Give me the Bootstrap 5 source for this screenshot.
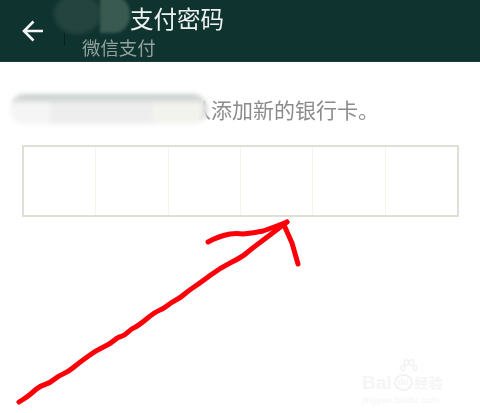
<!DOCTYPE html>
<html lang="zh">
<head>
<meta charset="utf-8">
<title>支付密码</title>
<link rel="stylesheet" href="https://cdn.jsdelivr.net/npm/bootstrap@5.3.0/dist/css/bootstrap.min.css">
<style>
html,body{margin:0;height:413px;overflow:hidden;background:#fff;font-family:"Liberation Sans","Noto Sans CJK SC",sans-serif}
.screen{position:relative;width:480px;height:413px;overflow:hidden}
.appbar{height:62px;background:#0f332f;padding-left:22px;border-bottom:1px solid #1c3d38}
.back-ic{width:22px;height:22px;margin-top:20px;flex:none}
.head-txt{margin-left:38px;position:relative}
.pay-title{font-size:23.5px;line-height:26px;margin:7px 0 0 48px;color:#eef3f1;white-space:nowrap;filter:blur(.3px)}
.pay-sub{font-size:18.4px;line-height:20px;margin-top:6px;color:#93a29d;white-space:nowrap;filter:blur(.3px)}
.smudge-a{position:absolute;left:54px;top:-6px;width:47px;height:40px;background:#24453f;border-radius:50%;filter:blur(2px)}
.smudge-b{position:absolute;left:100px;top:-4px;width:30px;height:37px;background:#385a51;border-radius:0 50% 50% 0;filter:blur(1.5px)}
.tick{position:absolute;left:64px;top:33px;width:1px;height:13px;background:#07211e}
.hint{margin:35px 0 0 190px;font-size:21px;line-height:28px;color:#8b8b8b;white-space:nowrap;filter:blur(.3px)}
.smudge-c{position:absolute;left:10px;top:94px;width:198px;height:30px;border-radius:15px 16px 15px 15px;filter:blur(2px);background:linear-gradient(180deg,#c9d0ce 0,#d0d5d3 16%,rgba(208,213,211,0) 34%),linear-gradient(90deg,#f5f5f5 0 20%,#eeeeee 20% 72%,#f3f3ee 72% 96%,#ccd2d0 100%)}
.pin-box{margin:20px 0 0 22px;width:437px;height:72px;border:2px solid #dedfd6}
.pin-cell{flex:1 1 0;border-right:1px solid #f3f4ec}
.pin-cell:last-child{border-right:0}
.ink{position:absolute;left:0;top:0;width:480px;height:413px;pointer-events:none}
.wm{position:absolute;left:362px;top:359px;width:90px;color:#f5f5f5;line-height:1}
.wm-paw{position:absolute;left:38px;top:0;width:17px;height:17px}
.wm-top{font-size:19px;font-weight:700;align-items:flex-end;height:33px;white-space:nowrap}
.wm-du{font-size:9px;border:2px solid #f2f2f2;border-radius:50%;padding:2px 2px;margin:0 2px 1px 2px}
.wm-cn{font-size:14px;margin-bottom:2px}
.wm-url{font-size:9.5px;margin-top:3px;white-space:nowrap}
</style>
</head>
<body>
<div class="screen">
  <header class="appbar d-flex">
    <svg class="back-ic" viewBox="0 0 22 22" aria-label="返回"><path d="M1.5 11H21M11.5 1.5 2 11l9.5 9.5" fill="none" stroke="#f2f5f4" stroke-width="2.6"/></svg>
    <div class="head-txt">
      <div class="pay-title">支付密码</div>
      <div class="pay-sub">微信支付</div>
    </div>
  </header>
  <div class="smudge-a"></div>
  <div class="smudge-b"></div>
  <div class="tick"></div>
  <p class="hint">从添加新的银行卡。</p>
  <div class="smudge-c"></div>
  <div class="pin-box d-flex">
    <div class="pin-cell"></div><div class="pin-cell"></div><div class="pin-cell"></div>
    <div class="pin-cell"></div><div class="pin-cell"></div><div class="pin-cell"></div>
  </div>
  <div class="wm">
    <svg class="wm-paw" viewBox="0 0 17 17" fill="none" stroke="#f2f2f2" stroke-width="1.4"><ellipse cx="3" cy="9" rx="2" ry="2.6"/><ellipse cx="6.5" cy="3.5" rx="2.2" ry="2.8"/><ellipse cx="11.5" cy="3.5" rx="2.2" ry="2.8"/><ellipse cx="15" cy="9" rx="1.8" ry="2.6"/></svg>
    <div class="wm-top d-flex"><span>Bai</span><span class="wm-du">du</span><span class="wm-cn">经验</span></div>
    <div class="wm-url">jingyan.baidu.com</div>
  </div>
  <svg class="ink" viewBox="0 0 480 413" fill="none" stroke="#fb0009" stroke-width="5" stroke-linecap="round" stroke-linejoin="round">
    <path d="M19 402L23 399.5Q27 397 30 394.5Q33 392 36.5 389Q40 386 45 384.5Q50 383 54 379.5Q58 376 63 374Q68 372 74 367Q80 362 88.5 356Q97 350 103.5 347Q110 344 114 340.5Q118 337 121 336.5Q124 336 127.5 332.5Q131 329 134.5 327.5Q138 326 146.5 319Q155 312 159 310.5Q163 309 167.5 305.5Q172 302 176 300Q180 298 184 294.5Q188 291 194 287Q200 283 210 275.5Q220 268 231 262.5Q242 257 246 253.5Q250 250 260 242.5Q270 235 278.5 228.5L287 222"/>
    <path d="M208 242Q219 236 230 234Q237 233 243 234Q254 233 263 231Q275 227 287 222"/>
    <path d="M284 225 292 243 298 264"/>
  </svg>
</div>
<script src="https://cdn.jsdelivr.net/npm/bootstrap@5.3.0/dist/js/bootstrap.bundle.min.js"></script>
</body>
</html>
